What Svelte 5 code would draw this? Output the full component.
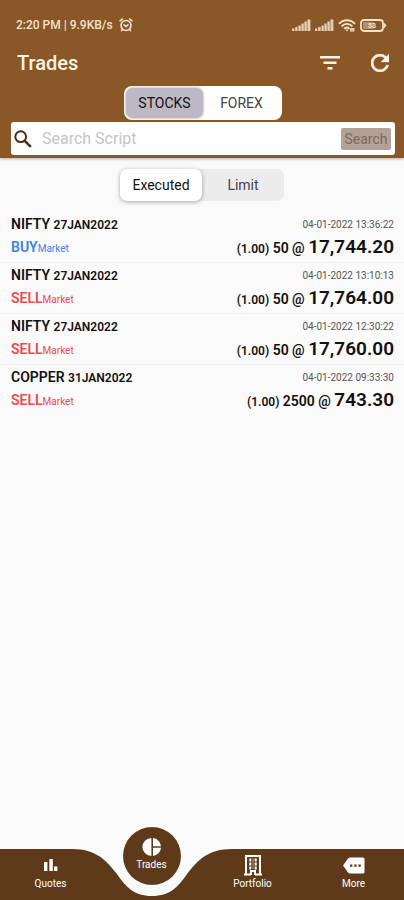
<script lang="ts">
  interface Trade {
    symbol: string;
    expiry: string;
    time: string;
    side: 'BUY' | 'SELL';
    lots: string;
    qty: number;
    price: string;
  }

  const trades: Trade[] = [
    { symbol: 'NIFTY', expiry: '27JAN2022', time: '04-01-2022 13:36:22', side: 'BUY', lots: '1.00', qty: 50, price: '17,744.20' },
    { symbol: 'NIFTY', expiry: '27JAN2022', time: '04-01-2022 13:10:13', side: 'SELL', lots: '1.00', qty: 50, price: '17,764.00' },
    { symbol: 'NIFTY', expiry: '27JAN2022', time: '04-01-2022 12:30:22', side: 'SELL', lots: '1.00', qty: 50, price: '17,760.00' },
    { symbol: 'COPPER', expiry: '31JAN2022', time: '04-01-2022 09:33:30', side: 'SELL', lots: '1.00', qty: 2500, price: '743.30' },
  ];

  let market = $state('STOCKS');
  let status = $state('Executed');
  let query = $state('');
</script>

{#snippet signal()}
  <svg width="19" height="12" viewBox="0 0 19 12" aria-hidden="true">
    <path fill="currentColor" opacity=".85" d="M0 9.5h2.4V12H0zM3.2 8h2.4v4H3.2zM6.4 6.5h2.4V12H6.4zM9.4 4.5h2.4V12H9.4zM12.4 2.5h2.4V12h-2.4zM15.4 .5h3V12h-3z" />
  </svg>
{/snippet}

<div class="app">
  <header>
    <div class="statusbar">
      <span>2:20 PM | 9.9KB/s</span>
      <svg width="14" height="15" viewBox="0 0 14 15" fill="none" stroke="currentColor" stroke-width="1.6" stroke-linecap="round" aria-hidden="true">
        <circle cx="7" cy="7.5" r="5" />
        <path d="M1 2.8L3.4 1M13 2.8L10.6 1M5 6.8L7 8.4L9 6.8M3.4 11.6L2.6 12.6M10.6 11.6L11.4 12.6" />
      </svg>
      <div class="indicators">
        {@render signal()}
        {@render signal()}
        <svg width="18" height="13" viewBox="0 0 18 13" fill="none" stroke="currentColor" stroke-width="1.9" aria-hidden="true">
          <path d="M1 4.8C5.5 0 12.5 0 17 4.8M3.6 7.4C6.8 4 11.2 4 14.4 7.4M6.2 9.8C8 8 10 8 11.6 9.8" />
          <path d="M7.4 10.4h3.2L9 12.6z" fill="currentColor" stroke="none" />
          <path d="M12 9h4.5v3.6H12z" fill="currentColor" stroke="none" opacity=".8" />
        </svg>
        <svg width="27" height="13" viewBox="0 0 27 13" aria-hidden="true">
          <rect x="1" y="1" width="22" height="11" rx="3" fill="none" stroke="currentColor" stroke-width="1.8" />
          <rect x="3" y="3" width="11" height="7" rx="1" fill="currentColor" opacity=".4" />
          <path d="M24 3.5L26.5 6.5L24 9.5z" fill="currentColor" />
          <text x="12" y="9" font-size="7" font-weight="700" text-anchor="middle" fill="currentColor">53</text>
        </svg>
      </div>
    </div>

    <div class="titlebar">
      <h1>Trades</h1>
      <button class="icon" aria-label="Filter">
        <svg width="20" height="14" viewBox="0 0 20 14" fill="currentColor" aria-hidden="true">
          <path d="M0 0h20v2.6H0zM3.5 5.5h13v2.6h-13zM7.5 11h5v2.6h-5z" />
        </svg>
      </button>
      <button class="icon" aria-label="Refresh">
        <svg width="18" height="18" viewBox="4 4 16 16" fill="currentColor" aria-hidden="true">
          <path stroke="currentColor" stroke-width=".5" d="M17.65 6.35A7.96 7.96 0 0 0 12 4a8 8 0 1 0 7.73 10h-2.08A6 6 0 1 1 12 6c1.66 0 3.14.69 4.22 1.78L13 11h7V4z" />
        </svg>
      </button>
    </div>

    <div class="segment markets">
      {#each ['STOCKS', 'FOREX'] as name}
        <button class:active={market === name} onclick={() => (market = name)}>{name}</button>
      {/each}
    </div>

    <form class="search" onsubmit={(e) => e.preventDefault()}>
      <svg width="18" height="18" viewBox="0 0 18 18" fill="none" stroke="currentColor" stroke-width="2" aria-hidden="true">
        <circle cx="6.7" cy="6.7" r="5.4" />
        <path d="M10.8 10.8L16.8 16.8" stroke-width="2.6" />
      </svg>
      <input type="text" placeholder="Search Script" aria-label="Search Script" bind:value={query} />
      <button type="submit">Search</button>
    </form>
  </header>

  <main>
    <div class="segment statuses">
      {#each ['Executed', 'Limit'] as name}
        <button class:active={status === name} onclick={() => (status = name)}>{name}</button>
      {/each}
    </div>

    <ul class="trades">
      {#each trades as t}
        <li>
          <div class="line">
            <span class="symbol">{t.symbol} <small>{t.expiry}</small></span>
            <time>{t.time}</time>
          </div>
          <div class="line deal">
            <span class="side" class:sell={t.side === 'SELL'}>{t.side}<small>Market</small></span>
            <span class="fill"><small>({t.lots})</small> {t.qty} @ <b>{t.price}</b></span>
          </div>
        </li>
      {/each}
    </ul>
  </main>

  <nav>
    <a href="#quotes">
      <svg width="20" height="20" viewBox="0 0 20 20" fill="currentColor" aria-hidden="true">
        <path d="M3 6h3.4v9H3zM8.4 3h3.4v12H8.4zM13 10.5h3.4V15H13z" />
      </svg>
      Quotes
    </a>
    <div class="current">
      <svg class="notch" width="160" height="48" viewBox="0 0 160 48" aria-hidden="true">
        <path fill="#fafafa" d="M0 0C24 0 34 11 45 25C54 38 62 47 80 47C98 47 106 38 115 25C126 11 136 0 160 0z" />
      </svg>
      <a class="bubble" href="#trades" aria-current="page">
        <svg width="20" height="20" viewBox="0 0 20 20" fill="currentColor" aria-hidden="true">
          <path d="M9.4 1v18A9 9 0 0 1 9.4 1zM11 1a9 9 0 0 1 8 8.3h-8zM11 10.8h8A9 9 0 0 1 11 19z" />
        </svg>
        Trades
      </a>
    </div>
    <a href="#portfolio">
      <svg width="20" height="22" viewBox="0 0 20 22" fill="none" stroke="currentColor" stroke-width="2" aria-hidden="true">
        <path d="M3 20V2h14v18M1 20.5h7M12 20.5h7M8 21v-4h4v4" />
        <path d="M7.3 4.5v11M12.7 4.5v11" stroke-dasharray="3 1" />
        <path d="M10 4v11" stroke-width="1" opacity=".5" />
      </svg>
      Portfolio
    </a>
    <a href="#more">
      <svg width="22" height="20" viewBox="0 0 22 20" aria-hidden="true">
        <path fill="currentColor" d="M0 9.5L5 2.5Q6 1.5 7 1.5H20Q21.5 1.5 21.5 3V16Q21.5 17.5 20 17.5H7Q6 17.5 5 16.5z" />
        <path fill="#5f3a1a" d="M7 8.4h2.4v2.4H7zM11.2 8.4h2.4v2.4h-2.4zM15.4 8.4h2.4v2.4h-2.4z" />
      </svg>
      More
    </a>
  </nav>
</div>

<style>
  :global(body) {
    margin: 0;
    background: #fafafa;
  }

  .app {
    min-height: 100vh;
    display: flex;
    flex-direction: column;
    font-family: Roboto, "Liberation Sans", sans-serif;
    color: #111;
  }

  button {
    border: 0;
    padding: 0;
    background: none;
    color: inherit;
    font: inherit;
    cursor: pointer;
  }

  svg {
    display: block;
    flex-shrink: 0;
  }

  header {
    display: flex;
    flex-direction: column;
    align-items: center;
    padding: 15px 9px 3px 11px;
    background: #8a5727;
    color: #fff3e6;
    box-shadow: 0 1px 3px rgba(0, 0, 0, 0.3);
  }

  .statusbar,
  .titlebar {
    align-self: stretch;
    display: flex;
    align-items: center;
  }

  .statusbar {
    gap: 6px;
    height: 20px;
    padding: 0 8px 0 5px;
    font-size: 12px;
    font-weight: 500;
    color: #f5e2cf;
  }

  .indicators {
    display: flex;
    align-items: center;
    gap: 4px;
    margin-left: auto;
  }

  .titlebar {
    gap: 31px;
    height: 51px;
    padding: 4px 6px 0;
    box-sizing: border-box;
  }

  h1 {
    flex: 1;
    margin: 0;
    font-size: 20px;
    font-weight: 500;
  }

  .segment {
    display: grid;
    grid-template-columns: 1fr 1fr;
    box-sizing: border-box;
    font-size: 14px;
    color: #444;
  }

  .segment .active {
    color: #111;
  }

  .markets {
    width: 158px;
    height: 34px;
    padding: 2px;
    border-radius: 8px;
    background: #fff;
  }

  .markets button {
    border-radius: 7px;
  }

  .markets .active {
    background: #bdb8c6;
    box-shadow: 0 0 3px rgba(0, 0, 0, 0.4);
  }

  .search {
    align-self: stretch;
    display: flex;
    align-items: center;
    gap: 10px;
    height: 33px;
    margin-top: 2px;
    padding: 0 4px 0 3px;
    box-sizing: border-box;
    border-radius: 3px;
    background: #fff;
    color: #4e2a14;
  }

  .search input {
    flex: 1;
    min-width: 0;
    padding: 0;
    border: 0;
    outline: 0;
    background: none;
    font: inherit;
    font-size: 16px;
    color: #333;
  }

  .search input::placeholder {
    color: #c4c4c4;
  }

  .search button {
    width: 50px;
    height: 22px;
    border-radius: 2px;
    background: #b3a196;
    font-size: 14px;
    color: #80685a;
  }

  main {
    flex: 1;
    display: flex;
    flex-direction: column;
    align-items: center;
    padding-top: 11px;
  }

  .statuses {
    width: 164px;
    height: 32px;
    border-radius: 7px;
    background: #ececec;
  }

  .statuses .active {
    border-radius: 7px;
    background: #fff;
    box-shadow: 0 1px 4px rgba(0, 0, 0, 0.35);
  }

  .trades {
    align-self: stretch;
    margin: 11px 0 0;
    padding: 0;
    list-style: none;
  }

  .trades li {
    height: 51px;
    padding: 3px 10px 0 11px;
    box-sizing: border-box;
    border-bottom: 1px solid #efefef;
  }

  .trades li:last-child {
    border-bottom: 0;
  }

  .line {
    display: flex;
    justify-content: space-between;
    align-items: center;
    line-height: 18px;
  }

  .deal {
    line-height: 26px;
  }

  .symbol {
    font-size: 14px;
    font-weight: 600;
  }

  .symbol small {
    font-size: 12px;
  }

  time {
    font-size: 10px;
    color: #555;
  }

  .side {
    font-size: 14px;
    font-weight: 600;
    color: #3b82e6;
  }

  .side.sell {
    color: #ea4a4a;
  }

  .side small {
    font-size: 10px;
    font-weight: 400;
  }

  .fill {
    font-size: 14px;
    font-weight: 600;
  }

  .fill small {
    font-size: 12px;
  }

  .fill b {
    font-size: 19px;
    font-weight: 600;
  }

  nav {
    position: sticky;
    bottom: 0;
    display: grid;
    grid-template-columns: repeat(4, 1fr);
    height: 51px;
    background: #5f3a1a;
    color: #fff;
    font-size: 10px;
  }

  nav a {
    display: flex;
    flex-direction: column;
    align-items: center;
    justify-content: flex-end;
    gap: 2px;
    padding-bottom: 10px;
    line-height: 12px;
    color: inherit;
    text-decoration: none;
  }

  .current {
    position: relative;
    display: flex;
    justify-content: center;
  }

  .notch {
    position: absolute;
    top: 0;
    left: 50%;
    transform: translateX(-50%);
  }

  nav .bubble {
    position: absolute;
    top: -22px;
    width: 58px;
    height: 58px;
    padding-bottom: 14px;
    box-sizing: border-box;
    border-radius: 50%;
    background: #5f3a1a;
  }
</style>
